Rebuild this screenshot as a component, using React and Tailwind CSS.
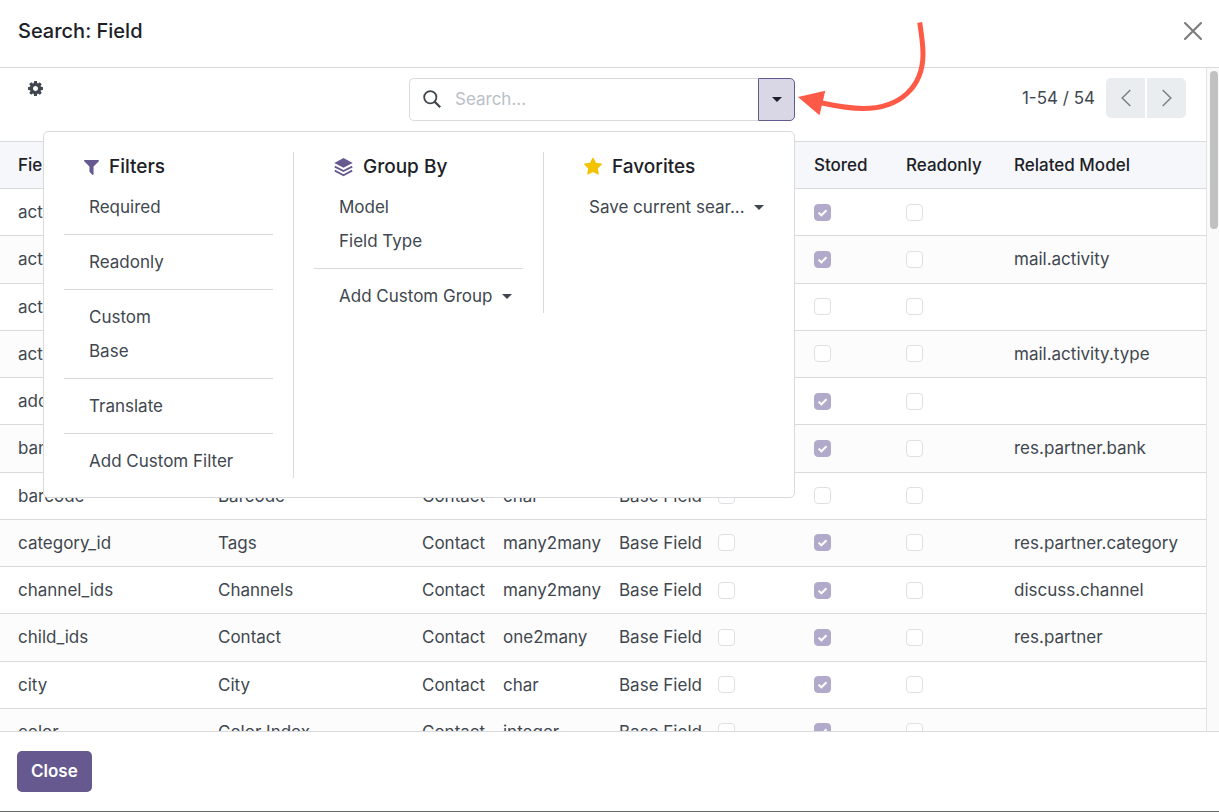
import React from "react";

const rows = [
  ["active", "Active", "boolean", true, ""],
  ["activity_ids", "Activities", "one2many", true, "mail.activity"],
  ["activity_state", "Activity State", "selection", false, ""],
  ["activity_type_id", "Next Activity Type", "many2one", false, "mail.activity.type"],
  ["additional_info", "Additional info", "char", true, ""],
  ["bank_ids", "Banks", "one2many", true, "res.partner.bank"],
  ["barcode", "Barcode", "char", false, ""],
  ["category_id", "Tags", "many2many", true, "res.partner.category"],
  ["channel_ids", "Channels", "many2many", true, "discuss.channel"],
  ["child_ids", "Contact", "one2many", true, "res.partner"],
  ["city", "City", "char", true, ""],
  ["color", "Color Index", "integer", true, ""],
];

const filterGroups = [["Required"], ["Readonly"], ["Custom", "Base"], ["Translate"], ["Add Custom Filter"]];

function Caret() {
  return (
    <svg viewBox="0 0 10 5" className="h-[5px] w-[10px] shrink-0" fill="currentColor" aria-hidden="true">
      <path d="M0 0h10L5 5z" />
    </svg>
  );
}

function GearIcon() {
  return (
    <svg viewBox="128 128 1536 1536" className="size-[15px]" fill="currentColor" aria-hidden="true">
      <path d="M1152 896q0-106-75-181t-181-75-181 75-75 181 75 181 181 75 181-75 75-181zm512-109v222q0 12-8 23t-20 13l-185 28q-19 54-39 91 35 50 107 138 10 12 10 25t-9 23q-27 37-99 108t-94 71q-12 0-26-9l-138-108q-44 23-91 38-16 136-29 186-7 28-36 28h-222q-14 0-24.5-8.5t-11.5-21.5l-28-184q-49-16-90-37l-141 107q-10 9-25 9-14 0-25-11-126-114-165-168-7-10-7-23 0-12 8-23 15-21 51-66.5t54-70.5q-27-50-41-99l-183-27q-13-2-21-12.5t-8-23.5v-222q0-12 8-23t19-13l186-28q14-46 39-92-40-57-107-138-10-12-10-24 0-10 9-23 26-36 98.5-107.5t94.5-71.5q13 0 26 10l138 107q44-23 91-38 16-136 29-186 7-28 36-28h222q14 0 24.5 8.5t11.5 21.5l28 184q49 16 90 37l142-107q9-9 24-9 13 0 25 10 129 119 165 170 7 8 7 22 0 12-8 23-15 21-51 66.5t-54 70.5q26 50 41 98l183 28q13 2 21 12.5t8 23.5z" />
    </svg>
  );
}

function FunnelIcon() {
  return (
    <svg viewBox="192 256 1408 1408" className="size-[15px]" fill="currentColor" aria-hidden="true">
      <path d="M1595 295q17 41-14 70l-493 493v742q0 42-39 59-13 5-25 5-27 0-45-19l-256-256q-19-19-19-45v-486l-493-493q-31-29-14-70 17-39 59-39h1280q42 0 59 39z" />
    </svg>
  );
}

function LayersIcon() {
  return (
    <svg viewBox="0 0 19 19" className="size-[19px]" aria-hidden="true">
      <path d="M9.5 0 18.7 4.9 9.5 9.7.3 4.9z" fill="currentColor" />
      <path d="M.8 8.6 9.5 13.1 18.2 8.6M.8 12.6 9.5 17.2 18.2 12.6" fill="none" stroke="currentColor" strokeWidth="1.8" />
    </svg>
  );
}

function StarIcon() {
  return (
    <svg viewBox="64 88 1664 1664" className="size-[18px]" fill="currentColor" aria-hidden="true">
      <path d="M1728 647q0 22-26 48l-363 354 86 500q1 7 1 20 0 21-10.5 35.5t-30.5 14.5q-19 0-40-12l-449-236-449 236q-22 12-40 12-21 0-31.5-14.5t-10.5-35.5q0-6 2-20l86-500-364-354q-25-27-25-48 0-37 56-46l502-73 225-455q19-41 49-41t49 41l225 455 502 73q56 9 56 46z" />
    </svg>
  );
}

function Tick({ label, checked = false }) {
  return (
    <span className="relative block size-[17px]">
      <input
        type="checkbox"
        aria-label={label}
        checked={checked}
        disabled
        readOnly
        className="block size-[17px] appearance-none rounded-[4px] border border-[#dfe0e2] bg-white checked:border-[#b2aaca] checked:bg-[#b2aaca]"
      />
      {checked && (
        <svg viewBox="0 0 17 17" className="pointer-events-none absolute inset-0 size-[17px]" aria-hidden="true">
          <path d="M4.6 8.6 7.4 11.3 12.5 6.3" fill="none" stroke="#fff" strokeWidth="2" />
        </svg>
      )}
    </span>
  );
}

function MenuHeading({ icon, color, children }) {
  return (
    <div className="mb-2 flex h-[30px] items-center gap-[10px] pl-5">
      <span className={color}>{icon}</span>
      <h2 className="text-[19px] font-medium text-[#1c2127]">{children}</h2>
    </div>
  );
}

function MenuItem({ children, caret }) {
  return (
    <button type="button" className="flex h-[34px] w-full items-center gap-[9px] pl-[25px] text-left whitespace-nowrap">
      <span>{children}</span>
      {caret && <Caret />}
    </button>
  );
}

function SearchMenu() {
  return (
    <div className="absolute top-full right-0 z-10 mt-[10px] flex w-[752px] items-start rounded-[5px] border border-[#d8dadd] bg-white pt-5 pb-[19px]">
      <section className="w-1/3 border-r border-[#d8dadd] px-5">
        <MenuHeading color="text-[#66598f]" icon={<FunnelIcon />}>Filters</MenuHeading>
        {filterGroups.map((group, i) => (
          <div key={group[0]}>
            {i > 0 && <hr className="my-[10px] border-[#d8dadd]" />}
            {group.map((item) => (
              <MenuItem key={item}>{item}</MenuItem>
            ))}
          </div>
        ))}
      </section>
      <section className="w-1/3 border-r border-[#d8dadd] px-5">
        <MenuHeading color="text-[#66598f]" icon={<LayersIcon />}>Group By</MenuHeading>
        <MenuItem>Model</MenuItem>
        <MenuItem>Field Type</MenuItem>
        <hr className="my-[10px] border-[#d8dadd]" />
        <MenuItem caret>Add Custom Group</MenuItem>
      </section>
      <section className="w-1/3 px-5">
        <MenuHeading color="text-[#f3c300]" icon={<StarIcon />}>Favorites</MenuHeading>
        <MenuItem caret>Save current sear...</MenuItem>
      </section>
    </div>
  );
}

function ControlPanel() {
  return (
    <div className="grid grid-cols-[1fr_386px_1fr] items-start pt-[10px] pr-5 pb-5 pl-[18px]">
      <button type="button" aria-label="Actions" className="ml-[6px] flex h-[21px] w-[22px] items-center justify-center justify-self-start">
        <GearIcon />
      </button>
      <div className="relative">
        <div className="flex h-[43px]">
          <label className="flex min-w-0 flex-1 items-center gap-[14px] rounded-l-[5px] border border-r-0 border-[#d8dadd] pb-px pl-[13px]">
            <svg viewBox="0 0 18 18" className="size-[18px] shrink-0" fill="none" stroke="currentColor" aria-hidden="true">
              <circle cx="7.3" cy="7.3" r="6.1" strokeWidth="1.8" />
              <path d="M11.6 11.6 17.2 17.2" strokeWidth="2.2" />
            </svg>
            <input
              type="text"
              aria-label="Search"
              placeholder="Search..."
              className="min-w-0 flex-1 bg-transparent outline-none placeholder:text-[#b9bfc7]"
            />
          </label>
          <button
            type="button"
            aria-label="Toggle search options"
            aria-expanded="true"
            className="flex w-[37px] items-center justify-center rounded-r-[5px] border border-[#66598f] bg-[#d9d6e5] text-[#1c2127]"
          >
            <Caret />
          </button>
        </div>
        <SearchMenu />
      </div>
      <div className="flex items-center justify-end">
        <span className="mr-[11px]">1-54 / 54</span>
        <div className="flex gap-[2px] text-[#7b8188]">
          <button type="button" aria-label="Previous" className="flex h-10 w-[39px] items-center justify-center rounded-l-[5px] bg-[#eaedf0]">
            <svg viewBox="0 0 10 18" className="h-[18px] w-[10px]" fill="none" stroke="currentColor" strokeWidth="1.5" aria-hidden="true">
              <path d="M9.3 1 1.2 9l8.1 8" />
            </svg>
          </button>
          <button type="button" aria-label="Next" className="flex h-10 w-[39px] items-center justify-center rounded-r-[5px] bg-[#eaedf0]">
            <svg viewBox="0 0 10 18" className="h-[18px] w-[10px]" fill="none" stroke="currentColor" strokeWidth="1.5" aria-hidden="true">
              <path d="M.7 1 8.8 9 .7 17" />
            </svg>
          </button>
        </div>
      </div>
    </div>
  );
}

function FieldTable() {
  return (
    <table className="h-[615px] w-full table-fixed border-separate border-spacing-0 text-left whitespace-nowrap [&_td]:overflow-hidden [&_td]:border-b [&_td]:border-[#d8dadd] [&_td]:px-2 [&_td:first-child]:pl-[18px] [&_th]:h-12 [&_th]:overflow-hidden [&_th]:border-y [&_th]:border-[#d8dadd] [&_th]:px-2 [&_th]:font-medium [&_th:first-child]:pl-[18px]">
      <colgroup>
        <col className="w-[210px]" />
        <col className="w-[204px]" />
        <col className="w-[81px]" />
        <col className="w-[116px]" />
        <col className="w-[99px]" />
        <col className="w-[96px]" />
        <col className="w-[92px]" />
        <col className="w-[108px]" />
        <col />
      </colgroup>
      <thead className="bg-[#f6f7fa] text-[#1c2127]">
        <tr>
          <th>Field Name</th>
          <th>Field Label</th>
          <th>Model</th>
          <th>Field Type</th>
          <th>Type</th>
          <th>Indexed</th>
          <th>Stored</th>
          <th>Readonly</th>
          <th>Related Model</th>
        </tr>
      </thead>
      <tbody>
        {rows.map(([name, label, type, stored, related]) => (
          <tr key={name} className="even:bg-[#fcfcfc]">
            <td>{name}</td>
            <td>{label}</td>
            <td>Contact</td>
            <td>{type}</td>
            <td>Base Field</td>
            <td><Tick label={`${name} indexed`} /></td>
            <td><Tick label={`${name} stored`} checked={stored} /></td>
            <td><Tick label={`${name} readonly`} /></td>
            <td>{related}</td>
          </tr>
        ))}
      </tbody>
    </table>
  );
}

export default function App() {
  return (
    <div className="relative flex h-screen flex-col overflow-hidden border-b border-[#66676a] bg-white font-['Inter','Liberation_Sans',sans-serif] text-[17px] leading-[26px] text-[#40474f]">
      <header className="flex items-center justify-between border-b border-[#d8dadd] pt-4 pr-4 pb-[21px] pl-[18px]">
        <h1 className="text-[20px] leading-[30px] font-medium text-[#1c2127]">Search: Field</h1>
        <button type="button" aria-label="Close dialog" className="flex size-5 items-center justify-center text-[#7b7b7b]">
          <svg viewBox="0 0 20 20" className="size-5" fill="none" stroke="currentColor" strokeWidth="2.1" strokeLinecap="round" aria-hidden="true">
            <path d="M2 2l16 16M18 2 2 18" />
          </svg>
        </button>
      </header>

      <div className="flex min-h-0 flex-1">
        <main className="min-w-0 flex-1 overflow-hidden">
          <ControlPanel />
          <FieldTable />
        </main>
        <div className="w-[13px] border-l border-[#e3e3e3] bg-[#fafafa] pt-[3px] pl-[3px]" aria-hidden="true">
          <div className="h-[158px] w-2 rounded-full bg-[#c1c1c1]" />
        </div>
      </div>

      <footer className="border-t border-[#d8dadd] bg-white px-[17px] pt-[19px] pb-[19px]">
        <button type="button" className="flex h-[41px] items-center rounded-[5px] bg-[#66598f] px-[14px] pb-px font-semibold text-white">
          Close
        </button>
      </footer>

      <svg viewBox="0 0 130 96" className="pointer-events-none absolute top-5 left-[798px] z-20 h-24 w-[130px]" aria-hidden="true">
        <path d="M121.7 2.5C123 11 125 23 125 34C125 66 103 88.5 65 88.5C51 88.5 38 86 24 83" fill="none" stroke="#ff5a47" strokeWidth="5" />
        <path d="M0 77 27.3 70.7 21.5 95.2z" fill="#ff5a47" />
      </svg>
    </div>
  );
}
